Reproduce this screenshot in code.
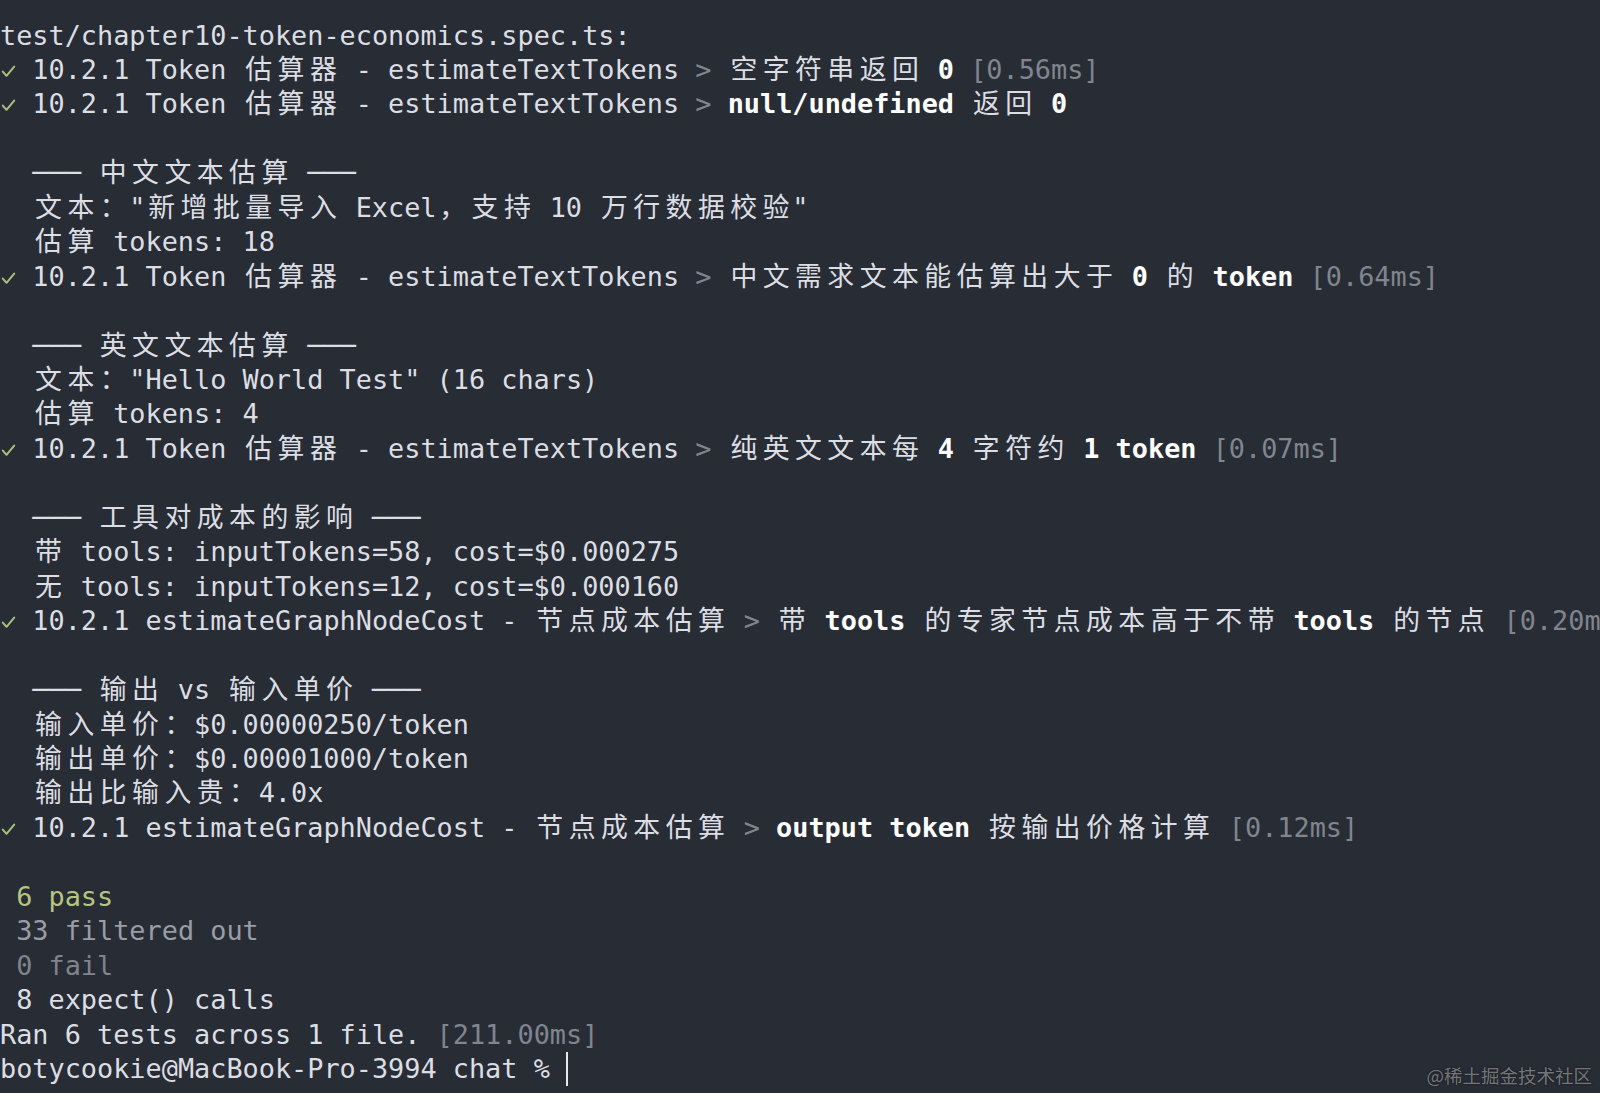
import type { ReactNode } from "react";

type Seg = [string, string?];

// terminal colours
const tone: Record<string, string> = {
  n: "text-[#dcdee3]",
  b: "text-white font-bold",
  g: "text-[#80858f]",
  pass: "text-[#b6c681]",
  filt: "text-[#9a9da5]",
  fail: "text-[#80848c]",
};

const ok: Seg = ["", "ok"];
const tok = " 10.2.1 Token 估算器 - estimateTextTokens ";
const cost = " 10.2.1 estimateGraphNodeCost - 节点成本估算 ";

const lines: Seg[][] = [
  [["test/chapter10-token-economics.spec.ts:"]],
  [ok, [tok], [">", "g"], [" 空字符串返回 "], ["0", "b"], [" "], ["[0.56ms]", "g"]],
  [ok, [tok], [">", "g"], [" "], ["null/undefined", "b"], [" 返回 "], ["0", "b"]],
  [],
  [["  ─── 中文文本估算 ───"]],
  [["  文本：\"新增批量导入 Excel，支持 10 万行数据校验\""]],
  [["  估算 tokens: 18"]],
  [ok, [tok], [">", "g"], [" 中文需求文本能估算出大于 "], ["0", "b"], [" 的 "], ["token", "b"], [" "], ["[0.64ms]", "g"]],
  [],
  [["  ─── 英文文本估算 ───"]],
  [["  文本：\"Hello World Test\" (16 chars)"]],
  [["  估算 tokens: 4"]],
  [ok, [tok], [">", "g"], [" 纯英文文本每 "], ["4", "b"], [" 字符约 "], ["1 token", "b"], [" "], ["[0.07ms]", "g"]],
  [],
  [["  ─── 工具对成本的影响 ───"]],
  [["  带 tools: inputTokens=58, cost=$0.000275"]],
  [["  无 tools: inputTokens=12, cost=$0.000160"]],
  [ok, [cost], [">", "g"], [" 带 "], ["tools", "b"], [" 的专家节点成本高于不带 "], ["tools", "b"], [" 的节点 "], ["[0.20ms]", "g"]],
  [],
  [["  ─── 输出 vs 输入单价 ───"]],
  [["  输入单价：$0.00000250/token"]],
  [["  输出单价：$0.00001000/token"]],
  [["  输出比输入贵：4.0x"]],
  [ok, [cost], [">", "g"], [" "], ["output token", "b"], [" 按输出价格计算 "], ["[0.12ms]", "g"]],
  [],
  [[" "], ["6 pass", "pass"]],
  [[" "], ["33 filtered out", "filt"]],
  [[" "], ["0 fail", "fail"]],
  [[" 8 expect() calls"]],
  [["Ran 6 tests across 1 file. "], ["[211.00ms]", "g"]],
  [["botycookie@MacBook-Pro-3994 chat % "], ["", "cursor"]],
];

// CJK and full-width forms take two terminal cells
const isWide = (c: string) => c.charCodeAt(0) >= 0x2e80;

function cells(text: string): ReactNode[] {
  const out: ReactNode[] = [];
  let run = "";
  [...text].forEach((c, i) => {
    if (isWide(c)) {
      if (run) out.push(run);
      run = "";
      out.push(
        <span key={i} className="inline-block w-[2ch] text-center">
          {c}
        </span>
      );
    } else {
      run += c;
    }
  });
  if (run) out.push(run);
  return out;
}

function Check() {
  return (
    <span className="inline-block w-[1ch] align-top h-[34.46px] relative">
      <svg
        className="absolute left-[1px] top-[12px]"
        width="15"
        height="13"
        viewBox="0 0 15 13"
        fill="none"
      >
        <path d="M1.8 6.6 L5.5 10.8 L13.2 1.6" stroke="#a7c27c" strokeWidth="2" strokeLinecap="round" strokeLinejoin="round" />
      </svg>
    </span>
  );
}

export default function App() {
  return (
    <div className="relative w-[1600px] h-[1093px] overflow-hidden bg-[#282c35] pt-[18.5px] font-['DejaVu_Sans_Mono','Noto_Sans_CJK_SC',monospace] text-[26.86px]">
      {lines.map((line, i) => (
        <div key={i} className="h-[34.46px] leading-[34.46px] whitespace-pre text-[#dcdee3]">
          {line.map(([text, kind = "n"], j) => {
            if (kind === "ok") return <Check key={j} />;
            if (kind === "cursor")
              return <span key={j} className="inline-block w-[2px] h-[34px] align-top bg-[#e8e8e8]" />;
            return (
              <span key={j} className={tone[kind]}>
                {cells(text)}
              </span>
            );
          })}
        </div>
      ))}

      {/* watermark */}
      <div className="absolute right-[8px] bottom-[9px] text-[18.5px] leading-none text-[#8e9096]/80 font-['Noto_Sans_CJK_SC',sans-serif] [text-shadow:0_0_2px_#111]">
        @稀土掘金技术社区
      </div>
    </div>
  );
}
